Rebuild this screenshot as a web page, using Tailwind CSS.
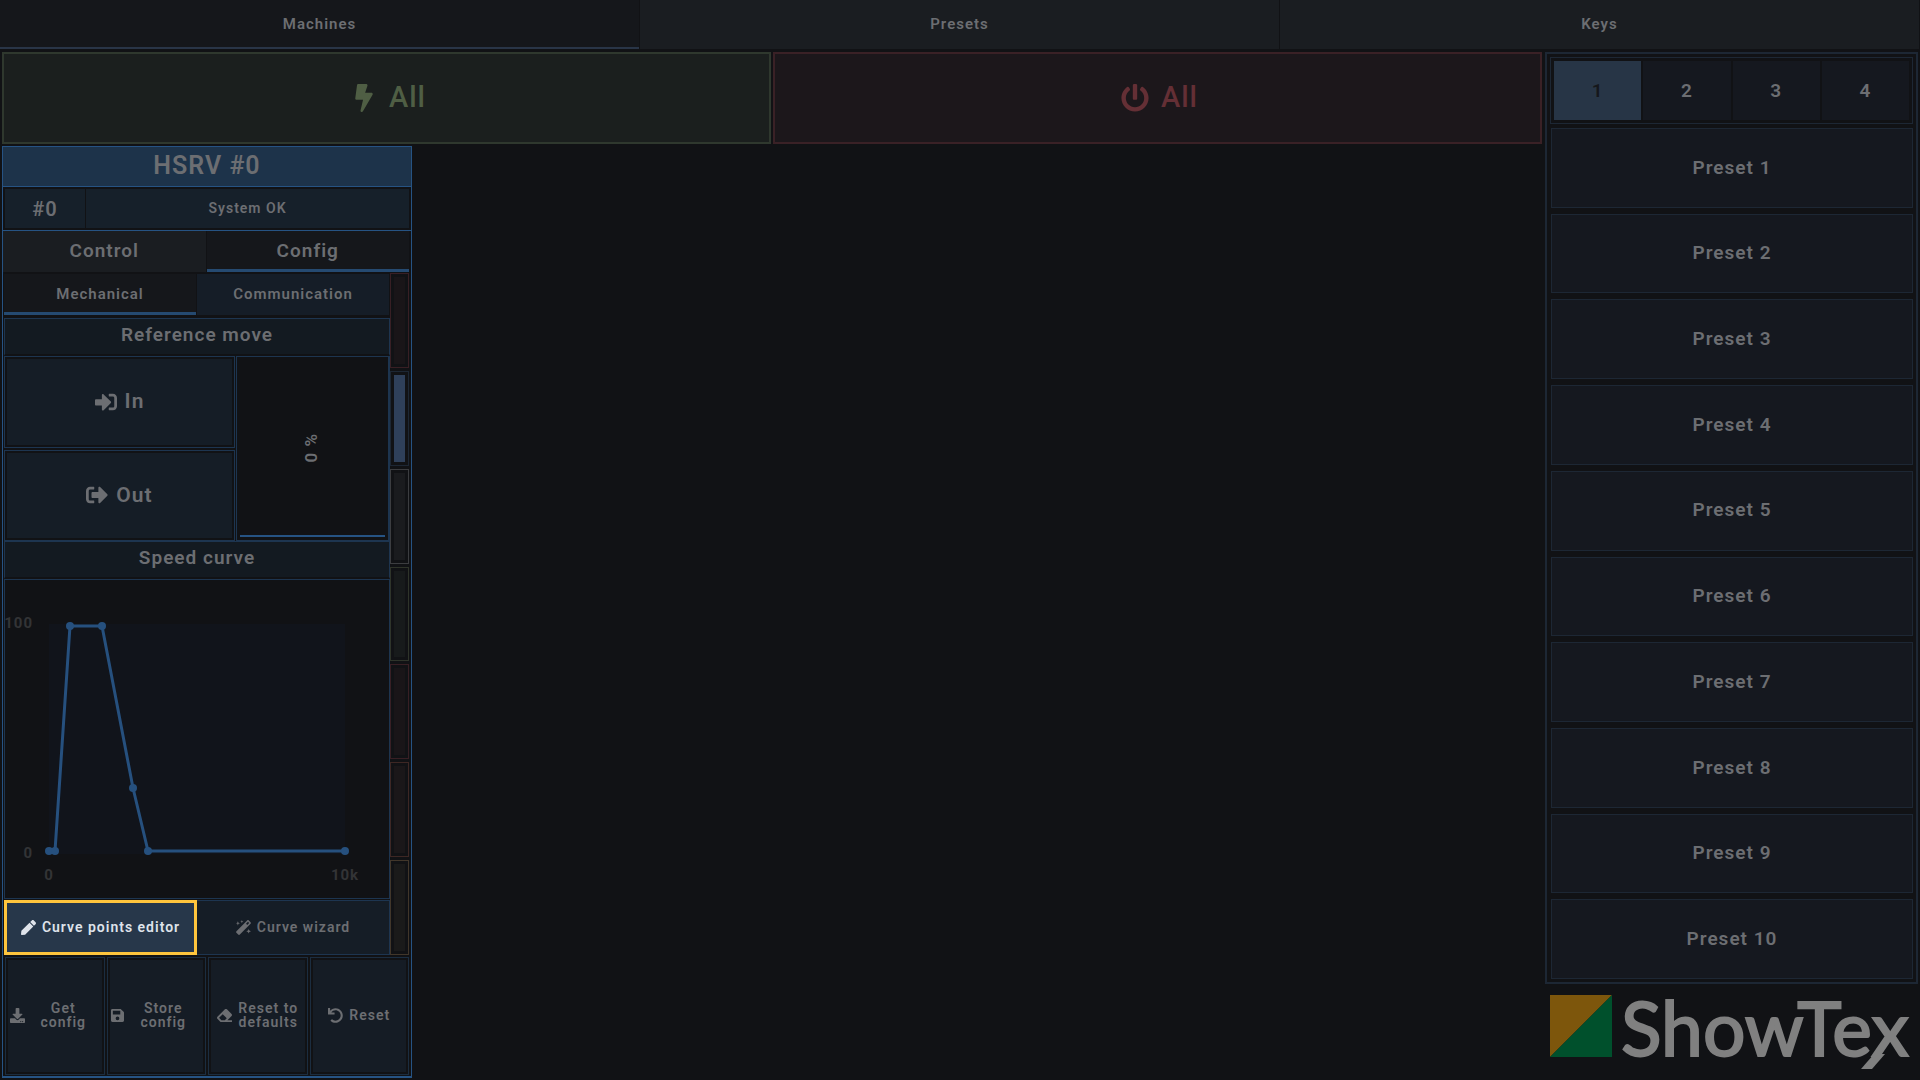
<!DOCTYPE html>
<html lang="en">
<head>
    <meta charset="UTF-8">
    <meta name="viewport" content="width=device-width, initial-scale=1.0">
    <title>ShowTex Machines</title>
    <script src="https://cdn.jsdelivr.net/npm/@tailwindcss/browser@4"></script>
</head>
<body class="flex h-screen flex-col gap-[3px] overflow-hidden bg-[#111215] font-[Roboto,sans-serif] font-semibold tracking-[1px] text-[#6c6e72]">

    <!-- Icons -->
    <svg class="hidden">
        <symbol id="bolt" viewBox="0 0 320 512"><path d="M296 160H180.6l42.6-129.8C227.2 15 215.7 0 200 0H56C44 0 33.8 8.9 32.2 20.8l-32 240C-1.7 275.2 9.5 288 24 288h118.7L96.6 482.5c-3.6 15.2 8 29.5 23.3 29.5 8.4 0 16.4-4.4 20.8-12l176-304c9.3-15.9-2.2-36-20.7-36z"/></symbol>
        <symbol id="power" viewBox="0 0 512 512"><path d="M400 54.1c63 45 104 118.6 104 201.9 0 136.8-110.8 247.7-247.5 248C120 504.3 8.2 393 8 256.4 7.9 173.1 48.9 99.3 111.8 54.2c11.7-8.3 28-4.8 35 7.7L162.6 90c5.9 10.5 3.1 23.8-6.6 31-41.5 30.8-68 79.6-68 134.9-.1 92.3 74.5 168.1 168 168.1 91.6 0 168.6-74.2 168-169.1-.3-51.8-24.7-101.8-68.1-134-9.7-7.2-12.4-20.5-6.5-30.9l15.8-28.1c7-12.4 23.2-16.1 34.8-7.8zM296 264V24c0-13.3-10.7-24-24-24h-32c-13.3 0-24 10.7-24 24v240c0 13.3 10.7 24 24 24h32c13.3 0 24-10.7 24-24z"/></symbol>
        <symbol id="sign-in" viewBox="0 0 512 512"><path d="M416 448h-84c-6.6 0-12-5.4-12-12v-40c0-6.6 5.4-12 12-12h84c17.7 0 32-14.3 32-32V160c0-17.7-14.3-32-32-32h-84c-6.6 0-12-5.4-12-12V76c0-6.6 5.4-12 12-12h84c53 0 96 43 96 96v192c0 53-43 96-96 96zm-47-201L201 79c-15-15-41-4.5-41 17v96H24c-13.3 0-24 10.7-24 24v96c0 13.3 10.7 24 24 24h136v96c0 21.5 26 32 41 17l168-168c9.3-9.4 9.3-24.6 0-34z"/></symbol>
        <symbol id="sign-out" viewBox="0 0 512 512"><path d="M497 273L329 441c-15 15-41 4.5-41-17v-96H152c-13.3 0-24-10.7-24-24v-96c0-13.3 10.7-24 24-24h136V88c0-21.4 25.9-32 41-17l168 168c9.3 9.4 9.3 24.6 0 34zM192 436v-40c0-6.6-5.4-12-12-12H96c-17.7 0-32-14.3-32-32V160c0-17.7 14.3-32 32-32h84c6.6 0 12-5.4 12-12V76c0-6.6-5.4-12-12-12H96c-53 0-96 43-96 96v192c0 53 43 96 96 96h84c6.6 0 12-5.4 12-12z"/></symbol>
        <symbol id="pencil" viewBox="0 0 512 512"><path d="M290.7 93.2l128 128-278 278-114.2 12.6C11.2 513.5-1.6 500.6.1 485.3l12.7-114.2L290.7 93.2zm207.2-19.1l-60-60c-18.8-18.8-49.2-18.8-68 0L313.3 70.6l128 128 56.6-56.5c18.7-18.8 18.7-49.2 0-68z"/></symbol>
        <symbol id="wand" viewBox="0 0 512 512"><path fill-rule="evenodd" d="M380 15c16-16 42-16 58 0l59 59c16 16 16 42 0 58L132 497c-16 16-42 16-58 0l-59-59c-16-16-16-42 0-58zM408 62l-66 66 42 42 66-66zM200 0l16 40 40 16-40 16-16 40-16-40-40-16 40-16zM64 40l20 52 52 20-52 20-20 52-20-52-52-20 52-20zM432 304l22 58 58 22-58 22-22 58-22-58-58-22 58-22z"/></symbol>
        <symbol id="download" viewBox="0 0 512 512"><path d="M216 0h80c13.3 0 24 10.7 24 24v168h87.7c17.8 0 26.7 21.5 14.1 34.1L269.7 378.3c-7.5 7.5-19.8 7.5-27.3 0L90.1 226.1c-12.6-12.6-3.7-34.1 14.1-34.1H192V24c0-13.3 10.7-24 24-24zm296 376v112c0 13.3-10.7 24-24 24H24c-13.3 0-24-10.7-24-24V376c0-13.3 10.7-24 24-24h146.7l49 49c20.1 20.1 52.5 20.1 72.6 0l49-49H488c13.3 0 24 10.7 24 24zm-124 88c0-11-9-20-20-20s-20 9-20 20 9 20 20 20 20-9 20-20zm64 0c0-11-9-20-20-20s-20 9-20 20 9 20 20 20 20-9 20-20z"/></symbol>
        <symbol id="save" viewBox="0 0 448 512"><path fill-rule="evenodd" d="M48 32h268c13 0 25 5 34 14l84 84c9 9 14 21 14 34v268c0 26-21 48-48 48H48c-27 0-48-22-48-48V80c0-27 21-48 48-48zM76 96c-7 0-12 5-12 12v104c0 7 5 12 12 12h232c7 0 12-5 12-12V108c0-7-5-12-12-12zm148 192a64 64 0 1 0 0 128 64 64 0 0 0 0-128z"/></symbol>
        <symbol id="eraser" viewBox="0 0 512 512"><path d="M497.9 273.9c18.8-18.7 18.8-49.1 0-67.9l-160-160c-18.7-18.7-49.1-18.7-67.9 0l-256 256c-18.7 18.8-18.7 49.2 0 67.9l96 96A48 48 0 0 0 144 480h356c6.6 0 12-5.4 12-12v-40c0-6.6-5.4-12-12-12H355.9l142-142.1zM195.3 211.3l137.4 137.4L265.4 416H150.6l-80-80 124.7-124.7z"/></symbol>
        <symbol id="undo" viewBox="0 0 512 512"><path d="M212.3 224.3H12c-6.6 0-12-5.4-12-12V12C0 5.4 5.4 0 12 0h48c6.6 0 12 5.4 12 12v78.1C117.8 39.3 184.3 7.5 258.2 8c136.9 1 246.4 111.6 246.1 248.5C504 393.3 393.1 504 256.3 504c-64.1 0-122.5-24.3-166.5-64.2-5.1-4.6-5.3-12.6-.5-17.4l34-34c4.5-4.5 11.7-4.7 16.4-.5C170.8 415.3 211.6 432 256.3 432c97.3 0 176-78.7 176-176 0-97.3-78.7-176-176-176-58.5 0-110.3 28.5-142.3 72.3h98.3c6.6 0 12 5.4 12 12v48c0 6.6-5.4 12-12 12z"/></symbol>
    </svg>

    <!-- Top tabs -->
    <nav class="grid h-[49px] shrink-0 grid-cols-3 gap-px pr-px text-[15px]">
        <button class="border-b-2 border-[#293547] bg-[#15171b] pt-px">Machines</button>
        <button class="border-b-2 border-transparent bg-[#1a1d21] pt-px">Presets</button>
        <button class="border-b-2 border-transparent bg-[#1a1d21] pt-px">Keys</button>
    </nav>

    <div class="flex min-h-0 flex-1 gap-[3px] px-[2px]">
        <main class="flex min-w-0 flex-1 flex-col gap-[2px] pb-[2px]">
            <!-- Global actions -->
            <div class="grid h-[92px] shrink-0 grid-cols-2 gap-[2px] text-[29px] font-medium">
                <button class="flex items-center justify-center gap-4 border-2 border-[#2f382e] bg-[#1b1f1e] pl-2 text-[#4f5e44]">
                    <svg class="h-7 w-[18px] fill-current"><use href="#bolt"/></svg>All
                </button>
                <button class="flex items-center justify-center gap-3 border-2 border-[#3a2126] bg-[#1c171b] pl-1 text-[#642f35]">
                    <svg class="size-7 fill-current"><use href="#power"/></svg>All
                </button>
            </div>

            <!-- Machine -->
            <section class="flex min-h-0 w-[410px] flex-1 flex-col border border-b-2 border-[#265383]">
                <h2 class="flex h-10 shrink-0 items-center justify-center border-b border-[#265383] bg-[#1d334a] pb-px text-[25px]">HSRV #0</h2>
                <div class="flex h-11 shrink-0 gap-px border-b border-[#265383] p-[2px]">
                    <div class="flex w-20 items-center justify-center bg-[#16202a] text-xl">#0</div>
                    <div class="flex flex-1 items-center justify-center bg-[#16202a] pb-px text-sm">System OK</div>
                </div>
                <div class="grid h-[41px] shrink-0 grid-cols-2 gap-px pr-[2px] text-[19px]">
                    <button class="border-b-3 border-transparent bg-[#1a1d21] pt-[3px]">Control</button>
                    <button class="border-b-3 border-[#254a71] bg-[#15171b] pt-[3px]">Config</button>
                </div>

                <div class="flex min-h-0 flex-1 pt-px pr-[2px]">
                    <div class="flex min-w-0 flex-1 flex-col pl-px">
                        <div class="mt-px grid h-[41px] shrink-0 grid-cols-2 gap-px pr-px text-[15px]">
                            <button class="border-b-3 border-[#254a71] bg-[#15171b] pt-[3px]">Mechanical</button>
                            <button class="border-b-3 border-transparent bg-[#151d27] pt-[3px]">Communication</button>
                        </div>
                        <h3 class="mt-[3px] flex h-[38px] shrink-0 items-center justify-center border border-b-2 border-[#1d3550] border-b-[#111215] bg-[#131a21] pb-[2px] text-[19px]">Reference move</h3>
                        <div class="flex h-[185px] shrink-0 gap-px border-r border-[#1d3550]">
                            <div class="flex w-[231px] flex-col gap-[2px] text-[21px]">
                                <button class="flex-1 border border-[#1d3550] p-[2px]">
                                    <span class="flex h-full items-center justify-center gap-2 bg-[#151d26]"><svg class="size-[22px] fill-current"><use href="#sign-in"/></svg>In</span>
                                </button>
                                <button class="flex-1 border border-[#1d3550] p-[2px]">
                                    <span class="flex h-full items-center justify-center gap-2 bg-[#151d26]"><svg class="size-[22px] fill-current"><use href="#sign-out"/></svg>Out</span>
                                </button>
                            </div>
                            <div class="flex flex-1 border border-[#1d3550] p-[3px]">
                                <div class="flex flex-1 items-center justify-center border-b-2 border-[#265383] pr-[2px] text-[17px]"><span class="rotate-180 [writing-mode:vertical-rl]">0 %</span></div>
                            </div>
                        </div>
                        <h3 class="flex h-[38px] shrink-0 items-center justify-center border border-b-2 border-[#1d3550] border-b-[#111215] bg-[#131a21] pb-[2px] text-[19px]">Speed curve</h3>
                        <div class="min-h-0 flex-1 border border-[#1d3550]">
                            <svg class="h-full w-full fill-[#333436] text-[15px] font-bold" viewBox="5 580 384 318">
                                <rect x="49" y="624" width="296" height="230" fill="#11141b"/>
                                <polyline points="49,851 55,851 70,626 102,626 133,788 148,851 345,851" fill="none" stroke="#26507e" stroke-width="3"/>
                                <g fill="#26507e">
                                    <circle cx="49" cy="851" r="4"/>
                                    <circle cx="55" cy="851" r="4"/>
                                    <circle cx="70" cy="626" r="4"/>
                                    <circle cx="102" cy="626" r="4"/>
                                    <circle cx="133" cy="788" r="4"/>
                                    <circle cx="148" cy="851" r="4"/>
                                    <circle cx="345" cy="851" r="4"/>
                                </g>
                                <text x="33" y="628" text-anchor="end">100</text>
                                <text x="33" y="858" text-anchor="end">0</text>
                                <text x="49" y="880" text-anchor="middle">0</text>
                                <text x="345" y="880" text-anchor="middle">10k</text>
                            </svg>
                        </div>
                        <div class="mt-px grid h-[55px] shrink-0 grid-cols-2 text-sm">
                            <button class="flex items-center justify-center gap-1.5 border-3 border-[#ffc53d] bg-[#27374a] pb-px text-[#dfe3ea]">
                                <svg class="size-[15px] fill-current"><use href="#pencil"/></svg>Curve points editor
                            </button>
                            <button class="flex items-center justify-center gap-1.5 border border-l-0 border-[#1d3550] bg-[#151d26] pb-px">
                                <svg class="size-[15px] fill-current"><use href="#wand"/></svg>Curve wizard
                            </button>
                        </div>
                    </div>
                    <!-- Section scroller -->
                    <div class="flex w-[19px] shrink-0 flex-col gap-[3px]">
                        <button aria-label="Section 1" class="flex flex-1 border border-[#381f24] p-[3px]"><span class="flex-1 bg-[#191518]"></span></button>
                        <button aria-label="Section 2" class="flex flex-1 border border-[#1d2734] p-[3px]"><span class="flex-1 bg-[#2f405a]"></span></button>
                        <button aria-label="Section 3" class="flex flex-1 border border-[#3c3d40] p-[3px]"><span class="flex-1 bg-[#1a1b1e]"></span></button>
                        <button aria-label="Section 4" class="flex flex-1 border border-[#2f342a] p-[3px]"><span class="flex-1 bg-[#171a1b]"></span></button>
                        <button aria-label="Section 5" class="flex flex-1 border border-[#381f24] p-[3px]"><span class="flex-1 bg-[#191518]"></span></button>
                        <button aria-label="Section 6" class="flex flex-1 border border-[#3d2724] p-[3px]"><span class="flex-1 bg-[#1a1719]"></span></button>
                        <button aria-label="Section 7" class="flex flex-1 border border-[#41362a] p-[3px]"><span class="flex-1 bg-[#1a1a1a]"></span></button>
                    </div>
                </div>

                <div class="grid h-[121px] shrink-0 grid-cols-4 gap-[2px] p-[2px] pb-px text-sm leading-[14px]">
                    <button class="border border-[#1b2d40] p-[2px]">
                        <span class="flex h-full items-center bg-[#151c25] pb-[2px] pl-[2px]"><svg class="size-[15px] shrink-0 fill-current"><use href="#download"/></svg><span class="flex-1 px-2">Get config</span></span>
                    </button>
                    <button class="border border-[#1b2d40] p-[2px]">
                        <span class="flex h-full items-center bg-[#151c25] pb-[2px] pl-px"><svg class="h-[15px] w-[13px] shrink-0 fill-current"><use href="#save"/></svg><span class="flex-1">Store config</span></span>
                    </button>
                    <button class="border border-[#1b2d40] p-[2px]">
                        <span class="flex h-full items-center bg-[#151c25] pb-[2px] pl-[6px]"><svg class="size-[15px] shrink-0 fill-current"><use href="#eraser"/></svg><span class="flex-1">Reset to defaults</span></span>
                    </button>
                    <button class="border border-[#1b2d40] p-[2px]">
                        <span class="flex h-full items-center justify-center gap-1.5 bg-[#151c25] pb-[2px]"><svg class="size-[15px] shrink-0 fill-current"><use href="#undo"/></svg>Reset</span>
                    </button>
                </div>
            </section>
        </main>

        <!-- Presets -->
        <aside class="flex w-[373px] shrink-0 flex-col text-[19px]">
            <div class="flex min-h-0 flex-1 flex-col gap-1 border-2 border-[#1d2734] p-[3px]">
                <div class="grid h-[67px] shrink-0 grid-cols-4 gap-[2px] border border-[#1d2734] p-[3px]">
                    <button class="bg-[#273546] pt-px text-[#15171b]">1</button>
                    <button class="bg-[#15181f] pt-px">2</button>
                    <button class="bg-[#15181f] pt-px">3</button>
                    <button class="bg-[#15181f] pt-px">4</button>
                </div>
                <div class="flex min-h-0 flex-1 flex-col gap-[6px] pl-px">
                    <button class="flex-1 border border-[#1d2734] bg-[#15181f]">Preset 1</button>
                    <button class="flex-1 border border-[#1d2734] bg-[#15181f]">Preset 2</button>
                    <button class="flex-1 border border-[#1d2734] bg-[#15181f]">Preset 3</button>
                    <button class="flex-1 border border-[#1d2734] bg-[#15181f]">Preset 4</button>
                    <button class="flex-1 border border-[#1d2734] bg-[#15181f]">Preset 5</button>
                    <button class="flex-1 border border-[#1d2734] bg-[#15181f]">Preset 6</button>
                    <button class="flex-1 border border-[#1d2734] bg-[#15181f]">Preset 7</button>
                    <button class="flex-1 border border-[#1d2734] bg-[#15181f]">Preset 8</button>
                    <button class="flex-1 border border-[#1d2734] bg-[#15181f]">Preset 9</button>
                    <button class="flex-1 border border-[#1d2734] bg-[#15181f]">Preset 10</button>
                </div>
            </div>
            <svg class="h-24 w-full shrink-0" viewBox="0 0 373 96" role="img" aria-label="ShowTex">
                <path d="M5 11h62L5 73z" fill="#7d560c"/>
                <path d="M67 11v62H5z" fill="#00502c"/>
                <text x="76" y="72" stroke="#808080" stroke-width="2" class="fill-[#808080] font-[Lato,sans-serif] text-[75px] font-normal tracking-normal">ShowTex</text>
                <!-- tail under the last letter -->
                <path d="M329 70h11L327 85h-11z" fill="#808080"/>
            </svg>
        </aside>
    </div>

</body>
</html>
